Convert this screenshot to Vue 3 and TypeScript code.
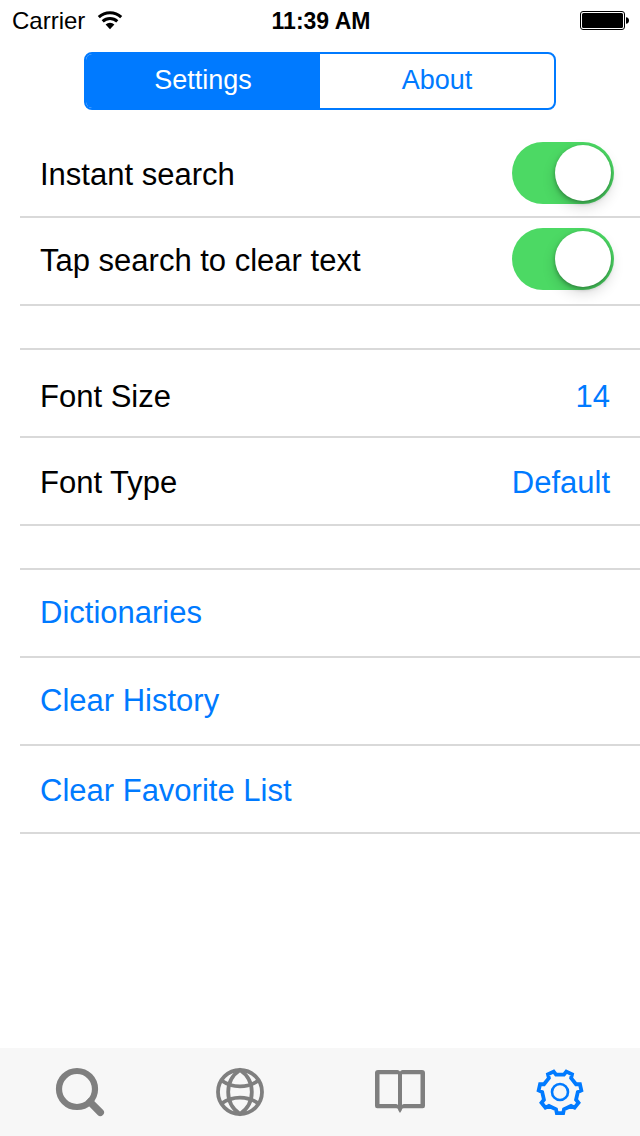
<script setup lang="ts">
import { ref } from 'vue'

type Tab = 'search' | 'web' | 'book' | 'settings'

const segment = ref<'settings' | 'about'>('settings')
const activeTab = ref<Tab>('settings')
const instantSearch = ref(true)
const tapToClear = ref(true)

function gearPoints(teeth: number, center: number): string {
  const corners: [number, number][] = [
    [-13, 17.8],
    [-8.5, 21.4],
    [8.5, 21.4],
    [13, 17.8],
  ]
  const points: string[] = []
  for (let i = 0; i < teeth; i++) {
    for (const [offset, radius] of corners) {
      const angle = ((90 + (i * 360) / teeth + offset) * Math.PI) / 180
      const x = center + radius * Math.cos(angle)
      const y = center + radius * Math.sin(angle)
      points.push(`${x.toFixed(2)},${y.toFixed(2)}`)
    }
  }
  return points.join(' ')
}

const gear = gearPoints(7, 26)
</script>

<template>
  <div class="screen">
    <header class="status">
      <div class="carrier">
        <span>Carrier</span>
        <svg class="wifi" viewBox="0 0 26 20" aria-hidden="true">
          <path d="M1.8 6.2A16.3 16.3 0 0 1 24.2 6.2" fill="none" stroke="#000" stroke-width="3" />
          <path d="M5.7 10.3A10.6 10.6 0 0 1 20.3 10.3" fill="none" stroke="#000" stroke-width="3" />
          <path d="M8.6 13.6A6.2 6.2 0 0 1 17.4 13.6L13 18.2Z" />
        </svg>
      </div>
      <time class="clock">11:39 AM</time>
      <svg class="battery" viewBox="0 0 50 20" aria-hidden="true">
        <rect x="0.5" y="0.5" width="44" height="18" rx="2.5" fill="none" stroke="#000" />
        <rect x="2" y="2" width="41" height="15" rx="1.5" />
        <path d="M46 6.2Q49 6.5 49 9.5Q49 12.5 46 12.8Z" />
      </svg>
    </header>

    <nav class="segments" aria-label="Sections">
      <button type="button" :class="{ on: segment === 'settings' }" @click="segment = 'settings'">Settings</button>
      <button type="button" :class="{ on: segment === 'about' }" @click="segment = 'about'">About</button>
    </nav>

    <main class="list">
      <section>
        <div class="row">
          <label for="instant">Instant search</label>
          <input id="instant" v-model="instantSearch" class="switch" type="checkbox" />
        </div>
        <div class="row raised">
          <label for="tap">Tap search to clear text</label>
          <input id="tap" v-model="tapToClear" class="switch" type="checkbox" />
        </div>
      </section>
      <section>
        <div class="row lowest">
          <span id="size-label">Font Size</span>
          <button type="button" class="link" aria-describedby="size-label">14</button>
        </div>
        <div class="row lowered">
          <span id="type-label">Font Type</span>
          <button type="button" class="link" aria-describedby="type-label">Default</button>
        </div>
      </section>
      <section>
        <div class="row"><button type="button" class="link">Dictionaries</button></div>
        <div class="row"><button type="button" class="link">Clear History</button></div>
        <div class="row lowered"><button type="button" class="link">Clear Favorite List</button></div>
      </section>
    </main>

    <nav class="tabs" aria-label="Main">
      <button type="button" aria-label="Search" :class="{ on: activeTab === 'search' }" @click="activeTab = 'search'">
        <svg viewBox="0 0 52 52">
          <circle cx="23" cy="23" r="18" stroke-width="6.2" />
          <path d="M36 36L46.3 46.3" stroke-width="7.4" stroke-linecap="round" />
        </svg>
      </button>
      <button type="button" aria-label="Web" :class="{ on: activeTab === 'web' }" @click="activeTab = 'web'">
        <svg viewBox="0 0 52 52" stroke-width="3.8">
          <circle cx="26" cy="26" r="22" />
          <path d="M26 4A26.4 26.4 0 0 0 26 48A26.4 26.4 0 0 0 26 4Z" />
          <path d="M7.5 14.5A32 32 0 0 0 44.5 14.5M7.5 37.5A32 32 0 0 1 44.5 37.5" />
        </svg>
      </button>
      <button type="button" aria-label="Dictionary" :class="{ on: activeTab === 'book' }" @click="activeTab = 'book'">
        <svg viewBox="0 0 52 52">
          <path
            class="solid"
            fill-rule="evenodd"
            d="M4 4H23.5Q25.2 4 26 5.5Q26.8 4 28.5 4H48Q51 4 51 7V40Q51 42.300 48.700 42.300H29.500Q27.800 42.300 27.600 44.500L26 47L24.400 44.500Q24.200 42.300 22.500 42.300H3.300Q1 42.300 1 40V7Q1 4 4 4ZM5.500 8.300V38H22Q23.200 38 24 39V8.300ZM28 8.300V39Q28.800 38 30 38H46.500V8.300Z"
          />
        </svg>
      </button>
      <button type="button" aria-label="Settings" :class="{ on: activeTab === 'settings' }" @click="activeTab = 'settings'">
        <svg viewBox="0 0 52 52">
          <polygon :points="gear" stroke-width="3.8" />
          <circle cx="26" cy="26" r="8" stroke-width="2.6" />
        </svg>
      </button>
    </nav>
  </div>
</template>

<style>
html,
body {
  margin: 0;
  background: #fff;
}
</style>

<style scoped>
.screen {
  display: flex;
  flex-direction: column;
  min-height: 100vh;
  font-family: 'Liberation Sans', Arial, sans-serif;
  color: #000;
}

button {
  margin: 0;
  padding: 0;
  border: 0;
  background: none;
  font: inherit;
  color: #007aff;
  cursor: pointer;
}

.status {
  display: grid;
  grid-template-columns: 1fr auto 1fr;
  align-items: center;
  height: 42px;
  padding: 0 10px 0 12px;
  font-size: 24px;
  line-height: 42px;
}

.carrier {
  display: flex;
  align-items: center;
  gap: 12px;
}

.wifi {
  width: 26px;
  height: 20px;
}

.clock {
  font-size: 23px;
  font-weight: 700;
}

.battery {
  justify-self: end;
  width: 50px;
  height: 20px;
}

.segments {
  display: flex;
  box-sizing: border-box;
  height: 58px;
  margin: 10px 84px 20px;
  border: 2px solid #007aff;
  border-radius: 8px;
  overflow: hidden;
}

.segments button {
  flex: 1;
  padding-bottom: 2px;
  font-size: 27px;
}

.segments .on {
  background: #007aff;
  color: #fff;
}

.list {
  flex: 1;
  padding-left: 20px;
  font-size: 31px;
}

section + section {
  margin-top: 42px;
  border-top: 2px solid #d9d9d9;
}

.row {
  display: flex;
  align-items: center;
  justify-content: space-between;
  box-sizing: border-box;
  height: 88px;
  padding: 0 30px 0 20px;
  border-bottom: 2px solid #d9d9d9;
}

.row label {
  padding-top: 4px;
}

.raised {
  padding-bottom: 4px;
}

.lowered {
  padding-top: 4px;
}

.lowest {
  padding-top: 8px;
}

.switch {
  appearance: none;
  flex: none;
  box-sizing: border-box;
  width: 102px;
  height: 62px;
  margin: 0 -4px 0 0;
  padding: 3px;
  border-radius: 31px;
  background: #d9d9d9;
  cursor: pointer;
}

.switch::before {
  content: '';
  display: block;
  width: 56px;
  height: 56px;
  border-radius: 50%;
  background: #fff;
  box-shadow: 0 6px 14px rgba(0, 0, 0, 0.16), 0 2px 4px rgba(0, 0, 0, 0.3);
}

.switch:checked {
  background: #4cd964;
}

.switch:checked::before {
  margin-left: auto;
}

.tabs {
  display: flex;
  height: 88px;
  background: #f7f7f7;
}

.tabs button {
  display: flex;
  flex: 1;
  align-items: center;
  justify-content: center;
  color: #7f7f7f;
}

.tabs .on {
  color: #007aff;
}

.tabs svg {
  width: 52px;
  height: 52px;
  fill: none;
  stroke: currentColor;
}

.tabs .solid {
  fill: currentColor;
  stroke: none;
}
</style>
